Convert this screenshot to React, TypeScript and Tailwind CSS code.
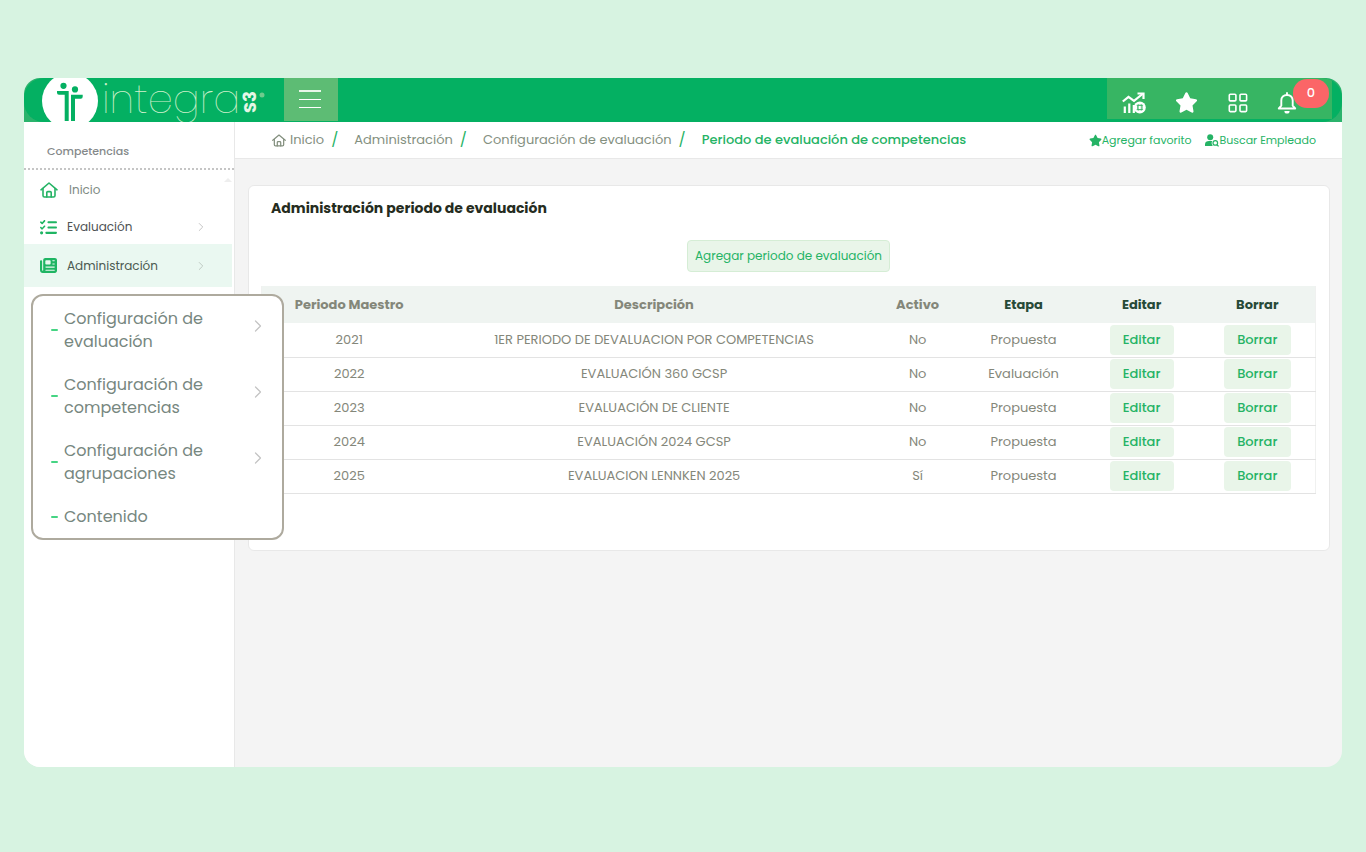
import React from "react";
import { FaStar, FaNewspaper, FaListCheck } from "react-icons/fa6";
import { ChevronRight } from "lucide-react";

const periods = [
  { year: "2021", description: "1ER PERIODO DE DEVALUACION POR COMPETENCIAS", active: "No", stage: "Propuesta" },
  { year: "2022", description: "EVALUACIÓN 360 GCSP", active: "No", stage: "Evaluación" },
  { year: "2023", description: "EVALUACIÓN DE CLIENTE", active: "No", stage: "Propuesta" },
  { year: "2024", description: "EVALUACIÓN 2024 GCSP", active: "No", stage: "Propuesta" },
  { year: "2025", description: "EVALUACION LENNKEN 2025", active: "Sí", stage: "Propuesta" },
];

const submenu = [
  { label: "Configuración de evaluación", nested: true },
  { label: "Configuración de competencias", nested: true },
  { label: "Configuración de agrupaciones", nested: true },
  { label: "Contenido", nested: false },
];

function HouseIcon({ className }: { className: string }) {
  return (
    <svg viewBox="0 0 18 16" className={className} fill="none" stroke="currentColor" strokeWidth="1.6" strokeLinecap="round" strokeLinejoin="round" aria-hidden="true">
      <path d="M1 7.8 9 1l8 6.8" />
      <path d="M3 6.5V13.5a1.5 1.5 0 0 0 1.5 1.5h9a1.5 1.5 0 0 0 1.5-1.5V6.5" />
      <path d="M6.8 15v-4.400a1 1 0 0 1 1-1h2.400a1 1 0 0 1 1 1V15" />
    </svg>
  );
}

function BrandMark() {
  return (
    <svg viewBox="0 0 56 44" className="h-11 w-14 shrink-0" aria-hidden="true">
      <circle cx="28" cy="23" r="28" fill="#fff" />
      <g fill="#04b062">
        <circle cx="21.500" cy="7.800" r="3.100" />
        <circle cx="33" cy="11.400" r="3.100" />
        <path d="M15 13h11.700v30h-4V16.800H17a2 2 0 0 1-2-2z" />
        <path d="M29 16.800h11.700v2a2 2 0 0 1-2 2H33V43h-4z" />
      </g>
    </svg>
  );
}

function ChartIcon() {
  return (
    <svg viewBox="0 0 24 22" className="h-[22px] w-6" fill="none" stroke="currentColor" aria-hidden="true">
      <path d="M.8 9.500 6.500 4.800l5.500 4L20.500 2" strokeWidth="2.200" />
      <path d="M15.500 1.500H21.500V7" strokeWidth="2.200" />
      <path d="M2.800 14.500v6.500M7.300 11.500v9.500M11.800 13v8" strokeWidth="2.200" />
      <circle cx="17.800" cy="15.400" r="6" fill="currentColor" stroke="none" />
      <path d="M15.500 13.300h4.700v4.300h-4.700zM14.600 13.300h6.500M14.600 17.600h6.500M16.300 12.300v6.300M19.300 12.300v6.300" stroke="#37b563" strokeWidth="0.7" />
    </svg>
  );
}

function GridIcon() {
  return (
    <svg viewBox="0 0 20 20" className="size-5" fill="none" stroke="currentColor" strokeWidth="1.6" aria-hidden="true">
      <rect x="1.300" y="1.300" width="6.600" height="6.600" rx="1" />
      <rect x="12" y="1.300" width="6.600" height="6.600" rx="1" />
      <rect x="1.300" y="12" width="6.600" height="6.600" rx="1" />
      <rect x="12" y="12" width="6.600" height="6.600" rx="1" />
    </svg>
  );
}

function BellIcon() {
  return (
    <svg viewBox="0 0 20 22" className="h-[22px] w-5" fill="none" stroke="currentColor" strokeWidth="1.9" strokeLinecap="round" strokeLinejoin="round" aria-hidden="true">
      <path d="M10 1v2M10 3C6.500 3 4.300 5.300 4.300 8.500v5.200L1.800 16.500h16.400l-2.500-2.800V8.500C15.700 5.300 13.500 3 10 3z" />
      <path d="M7.400 18.900h5.200a2.600 2.600 0 0 1-5.200 0z" fill="currentColor" stroke="none" />
    </svg>
  );
}

function EmployeeSearchIcon() {
  return (
    <svg viewBox="0 0 14 13" className="h-[13px] w-3.5" fill="currentColor" aria-hidden="true">
      <circle cx="5.200" cy="3.200" r="3" />
      <path d="M0 12V10.400C0 8 1.800 7 4 7h3.200c-.9 1.600-.6 3.400.6 5z" />
      <circle cx="10.300" cy="8.900" r="2.300" fill="none" stroke="currentColor" strokeWidth="1.2" />
      <path d="m12 10.800 1.600 1.600" stroke="currentColor" strokeWidth="1.3" />
    </svg>
  );
}

function Header() {
  return (
    <header className="h-11 bg-[#2bb36c]">
      <div className="flex h-full justify-between overflow-hidden rounded-[20px] bg-[#04b062]">
        <div className="flex">
          <a href="#inicio" aria-label="integra S3" className="flex w-[260px] items-center pl-[18px]">
            <BrandMark />
            <svg viewBox="0 0 170 44" className="h-11 w-[170px]" aria-hidden="true">
              <text x="4" y="35" fontSize="40" fontWeight="200" fill="#d0f0cc" fontFamily="Poppins, Lato, sans-serif">integra</text>
              <text transform="translate(158 35) rotate(-90)" fontSize="18" fontWeight="700" fill="#e4f6e6" fontFamily="Poppins, Inter, sans-serif">S3</text>
              <circle cx="164" cy="17" r="2.500" fill="#6fcb8d" />
            </svg>
          </a>
          <button type="button" aria-label="Abrir menú" className="flex h-[43px] w-[54px] flex-col items-center gap-[7px] bg-[#5dbc74] pt-3 pr-0.5">
            <span className="h-0.5 w-[22px] bg-[#e9f7ea]" />
            <span className="h-px w-[22px] bg-white" />
            <span className="h-px w-[22px] bg-white" />
          </button>
        </div>
        <div className="mr-[10px] flex h-[41px] w-[225px] items-center bg-[#37b563] pt-2 pl-[15px] text-white">
          <button type="button" aria-label="Indicadores"><ChartIcon /></button>
          <button type="button" aria-label="Favoritos" className="ml-[29px]"><FaStar className="size-[23px]" /></button>
          <button type="button" aria-label="Aplicaciones" className="ml-[30px]"><GridIcon /></button>
          <button type="button" aria-label="Notificaciones" className="relative ml-[29px]">
            <BellIcon />
            <span className="absolute -top-[13px] left-[16px] flex h-[29px] w-9 items-center justify-center rounded-[14px] bg-[#fb6567] text-[13px] font-medium">0</span>
          </button>
        </div>
      </div>
    </header>
  );
}

function Sidebar() {
  return (
    <aside className="w-[211px] shrink-0 border-r border-[#e8e8e8] bg-white">
      <h2 className="h-12 border-b-2 border-dotted border-[#c5c5c5] pt-[21px] pl-[23px] text-[11px] leading-4 font-medium text-[#85898a]">Competencias</h2>
      <nav className="relative text-xs">
        <span className="absolute top-2 right-0.5 border-x-4 border-b-4 border-x-transparent border-b-[#eeeeee]" />
        <a href="#inicio" className="flex h-[38px] items-center gap-[11px] pt-0.5 pl-4 text-[#7f8b84]">
          <HouseIcon className="h-4 w-[18px] text-[#25b365]" />
          Inicio
        </a>
        <a href="#evaluacion" className="flex h-9 items-center pt-0.5 pr-[26px] pl-4 text-[#4e5253]">
          <FaListCheck className="mr-[10px] size-[17px] text-[#1fb563]" />
          <span className="flex-1">Evaluación</span>
          <ChevronRight className="size-3.5 text-[#bdbdbd]" strokeWidth={1.5} />
        </a>
        <a href="#administracion" className="mr-0.5 flex h-[43px] items-center bg-[#eaf8f1] pr-6 pl-4 text-[#4b5a52]">
          <FaNewspaper className="mr-[10px] size-[17px] text-[#1fb563]" />
          <span className="flex-1">Administración</span>
          <ChevronRight className="size-3.5 text-[#b8c2bc]" strokeWidth={1.5} />
        </a>
        <ul className="absolute top-full left-[7px] z-10 mt-[7px] flex w-[253px] flex-col gap-5 rounded-xl border-2 border-[#aeaa9e] bg-white px-[18px] pt-[11px] pb-[10px] text-base leading-[23px] text-[#77877f]">
          {submenu.map((item) => (
            <li key={item.label}>
              <a href="#submenu" className="flex items-center">
                <span className="mr-[6px] h-0.5 w-[7px] rounded-sm bg-[#45d483]" />
                <span className="w-[150px]">{item.label}</span>
                {item.nested && <ChevronRight className="-mr-1 mb-2 ml-auto size-5 text-[#c4c4c4]" strokeWidth={1.5} />}
              </a>
            </li>
          ))}
        </ul>
      </nav>
    </aside>
  );
}

function Breadcrumbs() {
  return (
    <div className="flex h-[37px] items-center justify-between border-b border-[#e8e8e8] bg-white pr-[26px] pl-[37px]">
      <nav aria-label="Ruta" className="flex items-center text-[13px] text-[#84907f]">
        <a href="#inicio" className="flex items-center gap-1"><HouseIcon className="h-[13px] w-3.5" />Inicio</a>
        <span className="mx-[7px] text-[15px] text-[#25b365]">/</span>
        <a href="#administracion" className="ml-[9px]">Administración</a>
        <span className="mx-[7px] text-[15px] text-[#25b365]">/</span>
        <a href="#configuracion" className="ml-[9px]">Configuración de evaluación</a>
        <span className="mx-[7px] text-[15px] text-[#25b365]">/</span>
        <a href="#periodo" className="ml-[9px] font-medium text-[#25b365]">Periodo de evaluación de competencias</a>
      </nav>
      <div className="flex gap-3.5 text-[11px] text-[#25b365]">
        <button type="button" className="flex items-center"><FaStar className="size-[13px]" />Agregar favorito</button>
        <button type="button" className="flex items-center"><EmployeeSearchIcon />Buscar Empleado</button>
      </div>
    </div>
  );
}

function PeriodTable() {
  return (
    <table className="mt-[14px] w-full table-fixed border-x border-[#f0f1f0] text-center text-[13px] text-[#84877a]">
      <colgroup>
        <col className="w-[16.600%]" />
        <col className="w-[41.300%]" />
        <col className="w-[8.700%]" />
        <col className="w-[11.400%]" />
        <col className="w-[11%]" />
        <col className="w-[11%]" />
      </colgroup>
      <thead className="bg-[#eff4f1]">
        <tr className="h-[37px]">
          <th className="font-bold">Periodo Maestro</th>
          <th className="font-bold">Descripción</th>
          <th className="font-bold">Activo</th>
          <th className="font-bold text-[#274a38]">Etapa</th>
          <th className="font-bold text-[#274a38]">Editar</th>
          <th className="font-bold text-[#274a38]">Borrar</th>
        </tr>
      </thead>
      <tbody>
        {periods.map((period) => (
          <tr key={period.year} className="h-[34px] border-b border-[#e3e3e3]">
            <td>{period.year}</td>
            <td>{period.description}</td>
            <td>{period.active}</td>
            <td>{period.stage}</td>
            <td><button type="button" className="mx-auto block h-[30px] w-16 rounded bg-[#e9f5e9] font-medium text-[#25b365]">Editar</button></td>
            <td><button type="button" className="mx-auto block h-[30px] w-[67px] rounded bg-[#e9f5e9] font-medium text-[#25b365]">Borrar</button></td>
          </tr>
        ))}
      </tbody>
    </table>
  );
}

export default function App() {
  return (
    <div className="flex min-h-screen flex-col bg-[#d7f3e1] px-6 pt-[78px] pb-[85px] font-['Poppins','Inter',sans-serif]">
      <div className="flex flex-1 flex-col overflow-hidden rounded-2xl bg-[#f4f4f4]">
        <Header />
        <div className="flex flex-1">
          <Sidebar />
          <div className="min-w-0 flex-1">
            <Breadcrumbs />
            <main className="mt-[26px] mr-3 ml-[13px] rounded-md border border-[#e8e8e8] bg-white pt-3 pr-[13px] pb-14 pl-3">
              <h1 className="pl-[10px] text-sm leading-5 font-bold text-[#252c20]">Administración periodo de evaluación</h1>
              <div className="mt-[22px] flex justify-center">
                <button type="button" className="h-8 w-[203px] rounded border border-[#d5edd5] bg-[#e9f5e9] text-xs whitespace-nowrap text-[#25b365]">Agregar periodo de evaluación</button>
              </div>
              <PeriodTable />
            </main>
          </div>
        </div>
      </div>
    </div>
  );
}
